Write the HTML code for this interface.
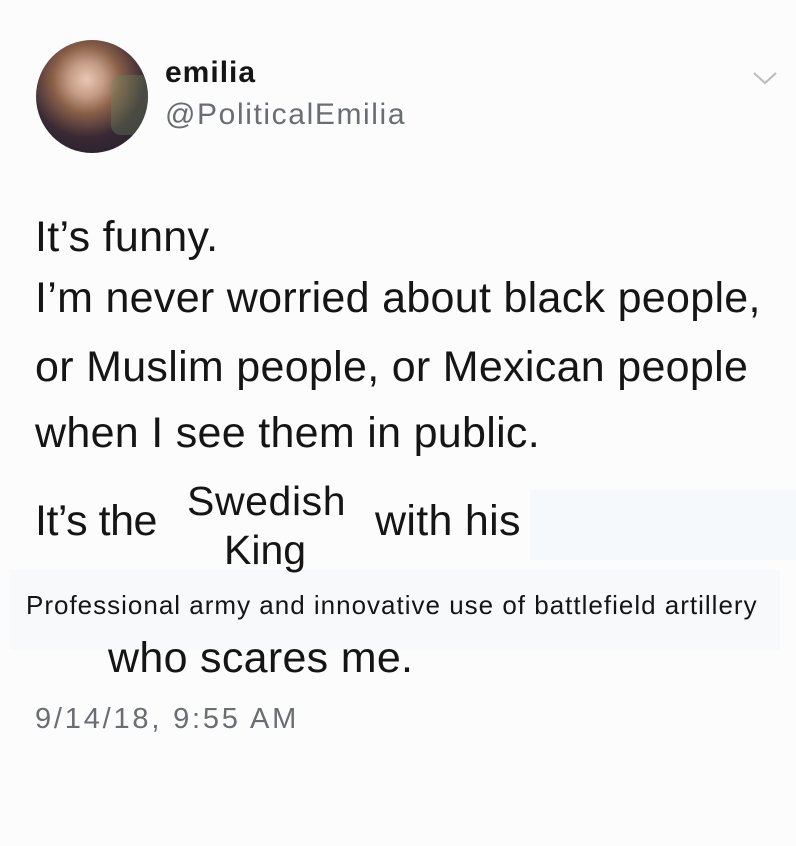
<!DOCTYPE html>
<html><head><meta charset="utf-8"><style>
body{margin:0;width:796px;height:846px;background:#fcfcfc;position:relative;overflow:hidden;font-family:"Liberation Sans",Arial,sans-serif;color:#151515}
.a{position:absolute;white-space:nowrap}
.m{font-size:43px;line-height:1;letter-spacing:.3px}
</style></head><body>
<div class="a" style="left:36px;top:40px;width:112px;height:113px;border-radius:50%;background:radial-gradient(circle at 45% 35%,#e8c8b4 0,#c59c86 18%,#8a6048 35%,#3a2a34 60%,#1c1a2a 100%);overflow:hidden">
<div style="position:absolute;left:75px;top:35px;width:40px;height:60px;background:#6a8a60;opacity:.35;border-radius:10px"></div></div>
<div class="a" style="left:165px;top:56px;font-size:30px;font-weight:bold;letter-spacing:1px">emilia</div>
<div class="a" style="left:165px;top:98px;font-size:30px;color:#6a6e72;letter-spacing:1.6px">@PoliticalEmilia</div>
<svg class="a" style="left:752px;top:70px" width="26" height="16"><path d="M2 3 L13 13 L24 3" fill="none" stroke="#b8bcc0" stroke-width="2"/></svg>
<div class="a m" style="left:35px;top:216px">It’s funny.</div>
<div class="a m" style="left:35px;top:277px">I’m never worried about black people,</div>
<div class="a m" style="left:35px;top:346px">or Muslim people, or Mexican people</div>
<div class="a m" style="left:35px;top:412px">when I see them in public.</div>
<div class="a" style="left:530px;top:490px;width:270px;height:70px;background:#f6f9fc"></div>
<div class="a" style="left:10px;top:570px;width:770px;height:80px;background:#f7f9fb"></div>
<div class="a m" style="left:35px;top:500px;letter-spacing:-.5px">It’s the</div>
<div class="a m" style="left:375px;top:500px">with his</div>
<div class="a" style="left:187px;top:478px;font-size:41px;letter-spacing:.6px">Swedish</div>
<div class="a" style="left:224px;top:527px;font-size:41px">King</div>
<div class="a" style="left:26px;top:590px;font-size:26px;letter-spacing:1px">Professional army and innovative use of battlefield artillery</div>
<div class="a m" style="left:108px;top:637px">who scares me.</div>
<div class="a" style="left:35px;top:703px;font-size:29px;color:#6a6e72;letter-spacing:2.8px">9/14/18, 9:55 AM</div>
</body></html>
